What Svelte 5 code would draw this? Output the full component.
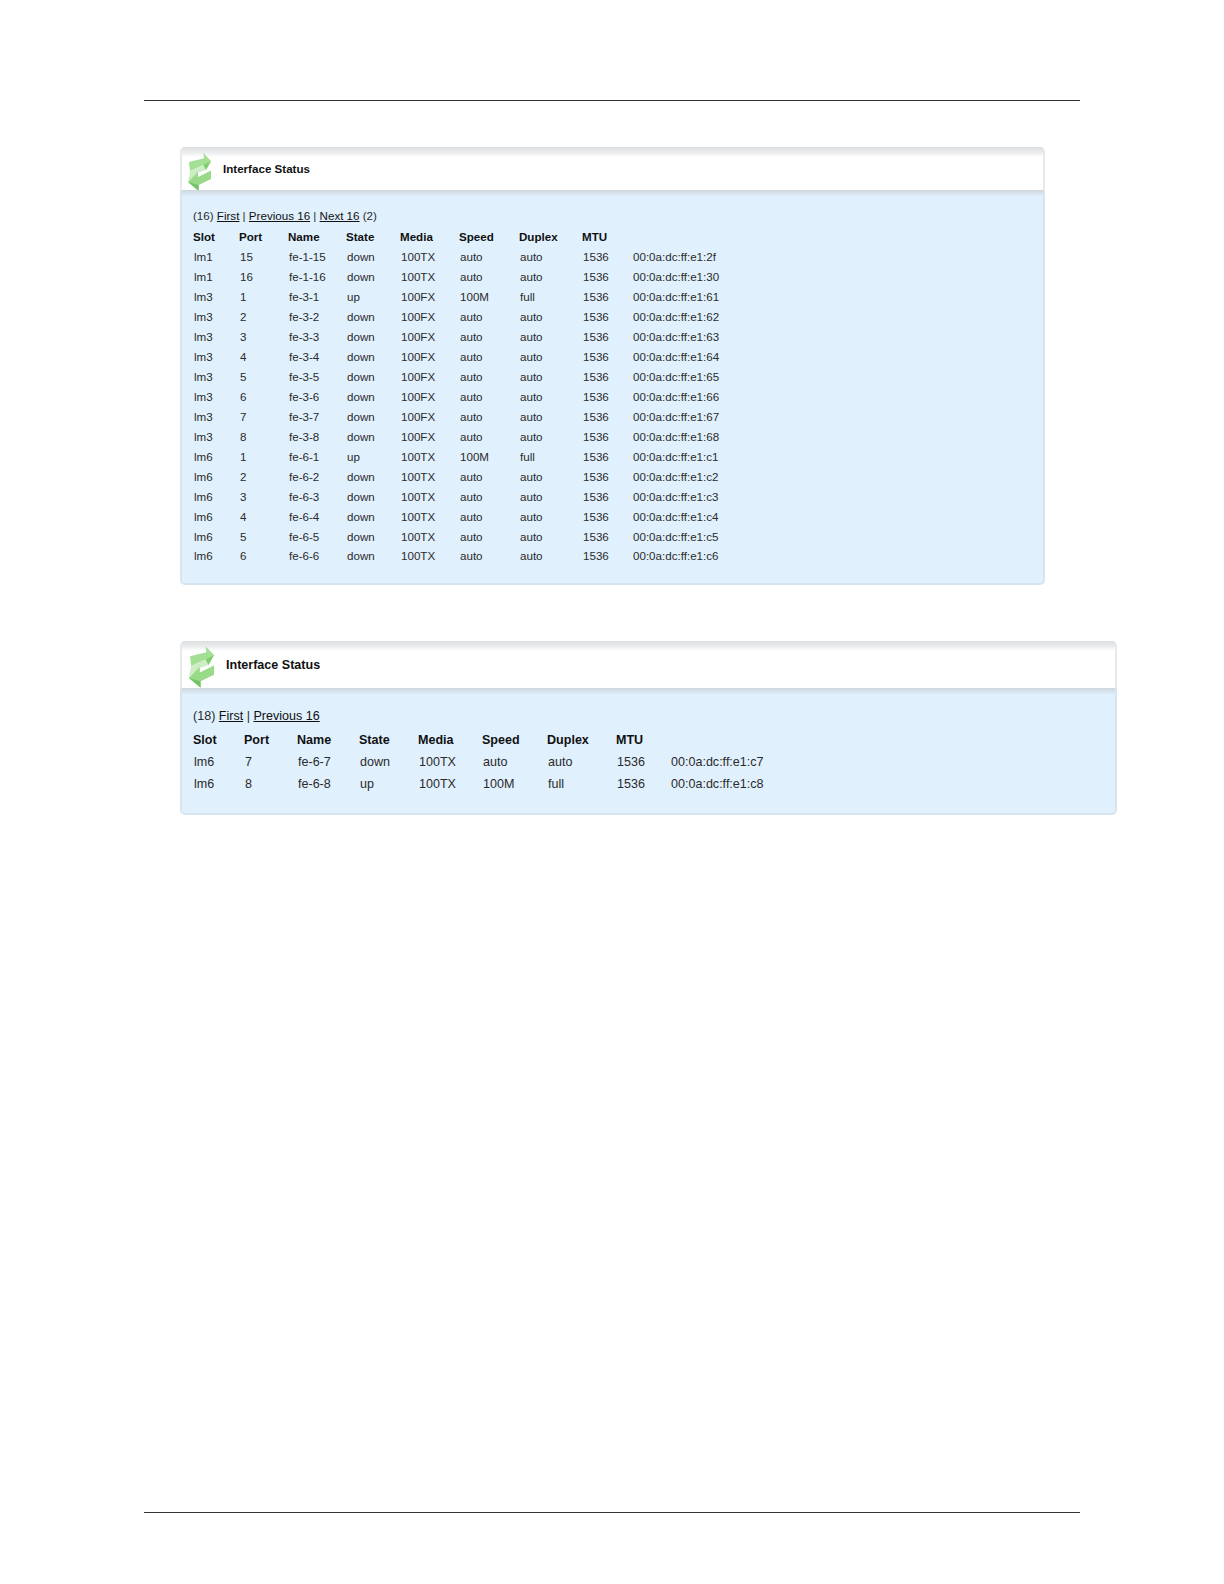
<script>
  const pageOne = [
    ['lm1', '15', 'fe-1-15', 'down', '100TX', 'auto', 'auto', '1536', '00:0a:dc:ff:e1:2f'],
    ['lm1', '16', 'fe-1-16', 'down', '100TX', 'auto', 'auto', '1536', '00:0a:dc:ff:e1:30'],
    ['lm3', '1', 'fe-3-1', 'up', '100FX', '100M', 'full', '1536', '00:0a:dc:ff:e1:61'],
    ['lm3', '2', 'fe-3-2', 'down', '100FX', 'auto', 'auto', '1536', '00:0a:dc:ff:e1:62'],
    ['lm3', '3', 'fe-3-3', 'down', '100FX', 'auto', 'auto', '1536', '00:0a:dc:ff:e1:63'],
    ['lm3', '4', 'fe-3-4', 'down', '100FX', 'auto', 'auto', '1536', '00:0a:dc:ff:e1:64'],
    ['lm3', '5', 'fe-3-5', 'down', '100FX', 'auto', 'auto', '1536', '00:0a:dc:ff:e1:65'],
    ['lm3', '6', 'fe-3-6', 'down', '100FX', 'auto', 'auto', '1536', '00:0a:dc:ff:e1:66'],
    ['lm3', '7', 'fe-3-7', 'down', '100FX', 'auto', 'auto', '1536', '00:0a:dc:ff:e1:67'],
    ['lm3', '8', 'fe-3-8', 'down', '100FX', 'auto', 'auto', '1536', '00:0a:dc:ff:e1:68'],
    ['lm6', '1', 'fe-6-1', 'up', '100TX', '100M', 'full', '1536', '00:0a:dc:ff:e1:c1'],
    ['lm6', '2', 'fe-6-2', 'down', '100TX', 'auto', 'auto', '1536', '00:0a:dc:ff:e1:c2'],
    ['lm6', '3', 'fe-6-3', 'down', '100TX', 'auto', 'auto', '1536', '00:0a:dc:ff:e1:c3'],
    ['lm6', '4', 'fe-6-4', 'down', '100TX', 'auto', 'auto', '1536', '00:0a:dc:ff:e1:c4'],
    ['lm6', '5', 'fe-6-5', 'down', '100TX', 'auto', 'auto', '1536', '00:0a:dc:ff:e1:c5'],
    ['lm6', '6', 'fe-6-6', 'down', '100TX', 'auto', 'auto', '1536', '00:0a:dc:ff:e1:c6']
  ];
  const pageTwo = [
    ['lm6', '7', 'fe-6-7', 'down', '100TX', 'auto', 'auto', '1536', '00:0a:dc:ff:e1:c7'],
    ['lm6', '8', 'fe-6-8', 'up', '100TX', '100M', 'full', '1536', '00:0a:dc:ff:e1:c8']
  ];
  const headers = ['Slot', 'Port', 'Name', 'State', 'Media', 'Speed', 'Duplex', 'MTU', ''];
</script>

{#snippet arrows()}
  <svg class="icon" viewBox="0 0 32 44" aria-hidden="true">
    <path d="M5 13 L20 9.3 L19.3 4 L27 12 L22 21 L19.3 16 L6 22 Z" fill="#a4e094" />
    <path d="M6 22 L19.3 16 L22 21 L13 24 L4 33 Z" fill="#cdeec4" />
    <path d="M4 33 L14 22.7 L14 28 L27 21.5 L27 30 L14.7 36 L14.7 42 Z" fill="#98da87" />
    <path d="M4 33 L14.7 36 L14.7 42 Z" fill="#74c466" />
    <path d="M22 21 L27 12 L19.3 16 Z" fill="#7fcf70" />
  </svg>
{/snippet}

{#snippet panel(size, rows)}
  <section class="panel {size}">
    <header class="head">
      {@render arrows()}
      <h2>Interface Status</h2>
    </header>
    <div class="body">
      <p class="pager">
        {#if size === 'small'}
          (16) <a href="#first">First</a> | <a href="#prev">Previous 16</a> | <a href="#next">Next 16</a> (2)
        {:else}
          (18) <a href="#first">First</a> | <a href="#prev">Previous 16</a>
        {/if}
      </p>
      <table>
        <thead>
          <tr>
            {#each headers as h}
              <th>{h}</th>
            {/each}
          </tr>
        </thead>
        <tbody>
          {#each rows as row}
            <tr>
              {#each row as cell}
                <td>{cell}</td>
              {/each}
            </tr>
          {/each}
        </tbody>
      </table>
    </div>
  </section>
{/snippet}

<div class="page">
  <div class="rule top"></div>
  {@render panel('small', pageOne)}
  {@render panel('large', pageTwo)}
  <div class="spacer"></div>
  <div class="rule"></div>
</div>

<style>
  :global(body) {
    margin: 0;
    background: #fff;
  }

  .page {
    height: 1584px;
    box-sizing: border-box;
    padding: 100px 144px 71px;
    display: flex;
    flex-direction: column;
    font-family: "Liberation Sans", Arial, sans-serif;
    color: #2b2b2b;
  }

  .rule {
    border-top: 1px solid #333;
  }

  .top {
    margin-bottom: 46px;
  }

  .spacer {
    flex: 1;
  }

  .panel {
    margin-left: 36px;
    box-sizing: border-box;
    border-radius: 5px;
    background: #e0f0fd;
    overflow: hidden;
    display: flex;
    flex-direction: column;
  }

  .panel.small {
    width: 865px;
    height: 438px;
    margin-bottom: 56px;
    font-size: 11.6px;
  }

  .panel.large {
    width: 937px;
    height: 174px;
    font-size: 12.55px;
  }

  .head {
    display: flex;
    align-items: center;
    background: linear-gradient(#dcdedf 0, #eceeef 6px, #fff 10px);
    border: solid #e8e9ea;
    border-width: 0 2px;
    box-sizing: border-box;
    flex: none;
  }

  .small .head {
    height: 43px;
  }

  .large .head {
    height: 47px;
  }

  .icon {
    flex: none;
    margin-left: 2px;
    align-self: flex-start;
  }

  .small .icon {
    width: 32px;
    height: 44px;
    margin-top: 2px;
  }

  .large .icon {
    width: 36px;
    height: 48px;
    margin-top: 1px;
  }

  h2 {
    margin: 0;
    font-size: inherit;
    font-weight: bold;
    color: #111;
  }

  .small h2 {
    margin-left: 7px;
  }

  .large h2 {
    margin-left: 6px;
  }

  .body {
    flex: 1;
    background: linear-gradient(#ced6dc 0, #e0f0fd 7px);
    border: solid #d9e5ee;
    border-width: 0 2px 2px;
    border-radius: 0 0 5px 5px;
    padding-left: 11px;
  }

  .small .body {
    padding-top: 19px;
  }

  .large .body {
    padding-top: 21px;
  }

  .pager {
    margin: 0;
  }

  a {
    color: #111;
    text-decoration: underline;
  }

  table {
    border-collapse: collapse;
    table-layout: fixed;
  }

  th,
  td {
    padding: 0;
    text-align: left;
    white-space: nowrap;
    font-weight: normal;
  }

  td {
    padding-left: 1px;
  }

  .small td:last-child {
    padding-left: 0;
  }

  th {
    font-weight: bold;
    color: #111;
  }

  .small table {
    width: 600px;
    margin-top: 5px;
  }

  .small tr {
    height: 19.95px;
  }

  .large table {
    width: 640px;
    margin-top: 6px;
  }

  .large tr {
    height: 22px;
  }

  .small th:nth-child(1) { width: 46px; }
  .small th:nth-child(2) { width: 49px; }
  .small th:nth-child(3) { width: 58px; }
  .small th:nth-child(4) { width: 54px; }
  .small th:nth-child(5) { width: 59px; }
  .small th:nth-child(6) { width: 60px; }
  .small th:nth-child(7) { width: 63px; }
  .small th:nth-child(8) { width: 51px; }

  .large th:nth-child(1) { width: 51px; }
  .large th:nth-child(2) { width: 53px; }
  .large th:nth-child(3) { width: 62px; }
  .large th:nth-child(4) { width: 59px; }
  .large th:nth-child(5) { width: 64px; }
  .large th:nth-child(6) { width: 65px; }
  .large th:nth-child(7) { width: 69px; }
  .large th:nth-child(8) { width: 54px; }
</style>
